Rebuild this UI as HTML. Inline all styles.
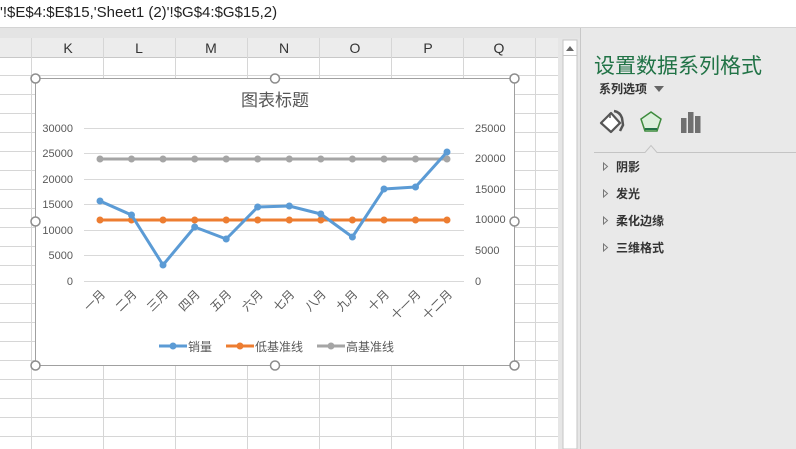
<!DOCTYPE html>
<html><head><meta charset="utf-8"><style>
body{margin:0;width:796px;height:449px;overflow:hidden;background:#fff;font-family:"Liberation Sans","Noto Sans CJK SC",sans-serif;position:relative}
.a{position:absolute}
</style></head><body>
<div class="a" style="left:0;top:0;width:796px;height:27px;background:#fff;border-bottom:1px solid #d4d4d4"></div>
<div class="a" style="left:0;top:4px;font-size:15px;color:#222;white-space:nowrap">'!$E$4:$E$15,'Sheet1 (2)'!$G$4:$G$15,2)</div>
<div class="a" style="left:0;top:28px;width:580px;height:10px;background:#e4e4e4"></div>
<div class="a" style="left:0;top:38px;width:558px;height:19px;background:#ececec;border-bottom:1px solid #c8c8c8"></div>
<svg class="a" style="left:0;top:0" width="796" height="449">
<g stroke="#d6d6d6" stroke-width="1">
<line x1="0" y1="75.5" x2="558" y2="75.5"/><line x1="0" y1="94.5" x2="558" y2="94.5"/><line x1="0" y1="113.5" x2="558" y2="113.5"/><line x1="0" y1="132.5" x2="558" y2="132.5"/><line x1="0" y1="151.5" x2="558" y2="151.5"/><line x1="0" y1="170.5" x2="558" y2="170.5"/><line x1="0" y1="189.5" x2="558" y2="189.5"/><line x1="0" y1="208.5" x2="558" y2="208.5"/><line x1="0" y1="227.5" x2="558" y2="227.5"/><line x1="0" y1="246.5" x2="558" y2="246.5"/><line x1="0" y1="265.5" x2="558" y2="265.5"/><line x1="0" y1="284.5" x2="558" y2="284.5"/><line x1="0" y1="303.5" x2="558" y2="303.5"/><line x1="0" y1="322.5" x2="558" y2="322.5"/><line x1="0" y1="341.5" x2="558" y2="341.5"/><line x1="0" y1="360.5" x2="558" y2="360.5"/><line x1="0" y1="379.5" x2="558" y2="379.5"/><line x1="0" y1="398.5" x2="558" y2="398.5"/><line x1="0" y1="417.5" x2="558" y2="417.5"/><line x1="0" y1="436.5" x2="558" y2="436.5"/>
<line x1="31.5" y1="38" x2="31.5" y2="449"/><line x1="103.5" y1="38" x2="103.5" y2="449"/><line x1="175.5" y1="38" x2="175.5" y2="449"/><line x1="247.5" y1="38" x2="247.5" y2="449"/><line x1="319.5" y1="38" x2="319.5" y2="449"/><line x1="391.5" y1="38" x2="391.5" y2="449"/><line x1="463.5" y1="38" x2="463.5" y2="449"/><line x1="535.5" y1="38" x2="535.5" y2="449"/>
</g>
<g font-size="14" fill="#333" text-anchor="middle"><text x="68" y="53">K</text><text x="139" y="53">L</text><text x="211" y="53">M</text><text x="284" y="53">N</text><text x="355" y="53">O</text><text x="428" y="53">P</text><text x="499" y="53">Q</text></g>
<rect x="558" y="38" width="22" height="411" fill="#e6e6e6"/>
<rect x="563" y="40" width="14" height="409" fill="#fff" stroke="#c6c6c6"/>
<line x1="563" y1="55.5" x2="577" y2="55.5" stroke="#c6c6c6"/>
<path d="M566 51 L570 46 L574 51Z" fill="#666"/>
<rect x="580" y="28" width="216" height="421" fill="#e9e9e9"/>
<line x1="580.5" y1="28" x2="580.5" y2="449" stroke="#c8c8c8"/>
<rect x="35.5" y="78.5" width="479" height="287" fill="#fff" stroke="#a0a0a0"/>
<text x="275" y="106" font-size="17" fill="#555" text-anchor="middle">图表标题</text>
<g stroke="#d9d9d9"><line x1="84" y1="128.5" x2="464" y2="128.5"/><line x1="84" y1="153.5" x2="464" y2="153.5"/><line x1="84" y1="179.5" x2="464" y2="179.5"/><line x1="84" y1="204.5" x2="464" y2="204.5"/><line x1="84" y1="230.5" x2="464" y2="230.5"/><line x1="84" y1="255.5" x2="464" y2="255.5"/><line x1="84" y1="281.5" x2="464" y2="281.5"/></g>
<g font-size="11" fill="#595959" text-anchor="end"><text x="73" y="132">30000</text><text x="73" y="157">25000</text><text x="73" y="183">20000</text><text x="73" y="208">15000</text><text x="73" y="234">10000</text><text x="73" y="259">5000</text><text x="73" y="285">0</text></g>
<g font-size="11" fill="#595959" text-anchor="start"><text x="475" y="132">25000</text><text x="475" y="162">20000</text><text x="475" y="193">15000</text><text x="475" y="223">10000</text><text x="475" y="254">5000</text><text x="475" y="285">0</text></g>
<polyline fill="none" stroke="#a5a5a5" stroke-width="3" points="100,159 447,159"/>
<g fill="#a5a5a5"><circle cx="100" cy="159" r="3.5"/><circle cx="131.5" cy="159" r="3.5"/><circle cx="163" cy="159" r="3.5"/><circle cx="194.7" cy="159" r="3.5"/><circle cx="226.2" cy="159" r="3.5"/><circle cx="257.7" cy="159" r="3.5"/><circle cx="289.3" cy="159" r="3.5"/><circle cx="320.8" cy="159" r="3.5"/><circle cx="352.4" cy="159" r="3.5"/><circle cx="384" cy="159" r="3.5"/><circle cx="415.5" cy="159" r="3.5"/><circle cx="447" cy="159" r="3.5"/></g>
<polyline fill="none" stroke="#ed7d31" stroke-width="3" points="100,220 447,220"/>
<g fill="#ed7d31"><circle cx="100" cy="220" r="3.5"/><circle cx="131.5" cy="220" r="3.5"/><circle cx="163" cy="220" r="3.5"/><circle cx="194.7" cy="220" r="3.5"/><circle cx="226.2" cy="220" r="3.5"/><circle cx="257.7" cy="220" r="3.5"/><circle cx="289.3" cy="220" r="3.5"/><circle cx="320.8" cy="220" r="3.5"/><circle cx="352.4" cy="220" r="3.5"/><circle cx="384" cy="220" r="3.5"/><circle cx="415.5" cy="220" r="3.5"/><circle cx="447" cy="220" r="3.5"/></g>
<polyline fill="none" stroke="#5b9bd5" stroke-width="3" stroke-linejoin="round" points="100,201 131.5,215 163,265 194.7,227 226.2,239 257.7,207 289.3,206 320.8,214 352.4,237 384,189 415.5,187 447,152"/>
<g fill="#5b9bd5"><circle cx="100" cy="201" r="3.5"/><circle cx="131.5" cy="215" r="3.5"/><circle cx="163" cy="265" r="3.5"/><circle cx="194.7" cy="227" r="3.5"/><circle cx="226.2" cy="239" r="3.5"/><circle cx="257.7" cy="207" r="3.5"/><circle cx="289.3" cy="206" r="3.5"/><circle cx="320.8" cy="214" r="3.5"/><circle cx="352.4" cy="237" r="3.5"/><circle cx="384" cy="189" r="3.5"/><circle cx="415.5" cy="187" r="3.5"/><circle cx="447" cy="152" r="3.5"/></g>
<g font-size="12" fill="#595959" text-anchor="end">
<text transform="translate(106,295) rotate(-45)">一月</text><text transform="translate(137.5,295) rotate(-45)">二月</text><text transform="translate(169,295) rotate(-45)">三月</text><text transform="translate(200.7,295) rotate(-45)">四月</text><text transform="translate(232.2,295) rotate(-45)">五月</text><text transform="translate(263.7,295) rotate(-45)">六月</text><text transform="translate(295.3,295) rotate(-45)">七月</text><text transform="translate(326.8,295) rotate(-45)">八月</text><text transform="translate(358.4,295) rotate(-45)">九月</text><text transform="translate(390,295) rotate(-45)">十月</text><text transform="translate(421.5,295) rotate(-45)">十一月</text><text transform="translate(453,295) rotate(-45)">十二月</text></g>
<g font-size="12" fill="#595959">
<line x1="159" y1="346" x2="187" y2="346" stroke="#5b9bd5" stroke-width="3"/><circle cx="173" cy="346" r="3.5" fill="#5b9bd5"/><text x="188" y="351">销量</text>
<line x1="226" y1="346" x2="254" y2="346" stroke="#ed7d31" stroke-width="3"/><circle cx="240" cy="346" r="3.5" fill="#ed7d31"/><text x="255" y="351">低基准线</text>
<line x1="317" y1="346" x2="345" y2="346" stroke="#a5a5a5" stroke-width="3"/><circle cx="331" cy="346" r="3.5" fill="#a5a5a5"/><text x="346" y="351">高基准线</text></g>
<g fill="#fff" stroke="#8c8c8c" stroke-width="1.5"><circle cx="35.5" cy="78.5" r="4.5"/><circle cx="275" cy="78.5" r="4.5"/><circle cx="514.5" cy="78.5" r="4.5"/><circle cx="35.5" cy="221.5" r="4.5"/><circle cx="514.5" cy="221.5" r="4.5"/><circle cx="35.5" cy="365.5" r="4.5"/><circle cx="275" cy="365.5" r="4.5"/><circle cx="514.5" cy="365.5" r="4.5"/></g>
<text x="594" y="73" font-size="21" fill="#217346">设置数据系列格式</text>
<text x="599" y="93" font-size="12" font-weight="bold" fill="#333">系列选项</text>
<path d="M654 86 L664 86 L659 92Z" fill="#666"/>
<path d="M601 123 L611 113 L620 123 L611 132Z" fill="#fff" stroke="#555" stroke-width="2.2" stroke-linejoin="round"/>
<line x1="610" y1="113" x2="610" y2="118" stroke="#555" stroke-width="1.5"/>
<path d="M614 111 Q620 112 622 118 L623 125 L620 131" fill="none" stroke="#555" stroke-width="2.5"/>
<path d="M651 112 L661 119 L657 131 L645 131 L641 119Z" fill="#dcefdc" stroke="#3d8b3d" stroke-width="1.5"/>
<line x1="645" y1="129" x2="657" y2="129" stroke="#217346" stroke-width="2"/>
<g fill="#707070"><rect x="681" y="118" width="5.5" height="15"/><rect x="688" y="112" width="5.5" height="21"/><rect x="695" y="116" width="5.5" height="17"/></g>
<path d="M594 152.5 L645 152.5 L651 145.5 L657 152.5 L796 152.5" fill="none" stroke="#c4c4c4"/>
<g fill="none" stroke="#777"><path d="M603.5 163 L607.5 166.5 L603.5 170Z"/><path d="M603.5 190 L607.5 193.5 L603.5 197Z"/><path d="M603.5 217 L607.5 220.5 L603.5 224Z"/><path d="M603.5 244 L607.5 247.5 L603.5 251Z"/></g>
<g font-size="12" font-weight="bold" fill="#333"><text x="616" y="171">阴影</text><text x="616" y="198">发光</text><text x="616" y="225">柔化边缘</text><text x="616" y="252">三维格式</text></g>
</svg>
</body></html>
